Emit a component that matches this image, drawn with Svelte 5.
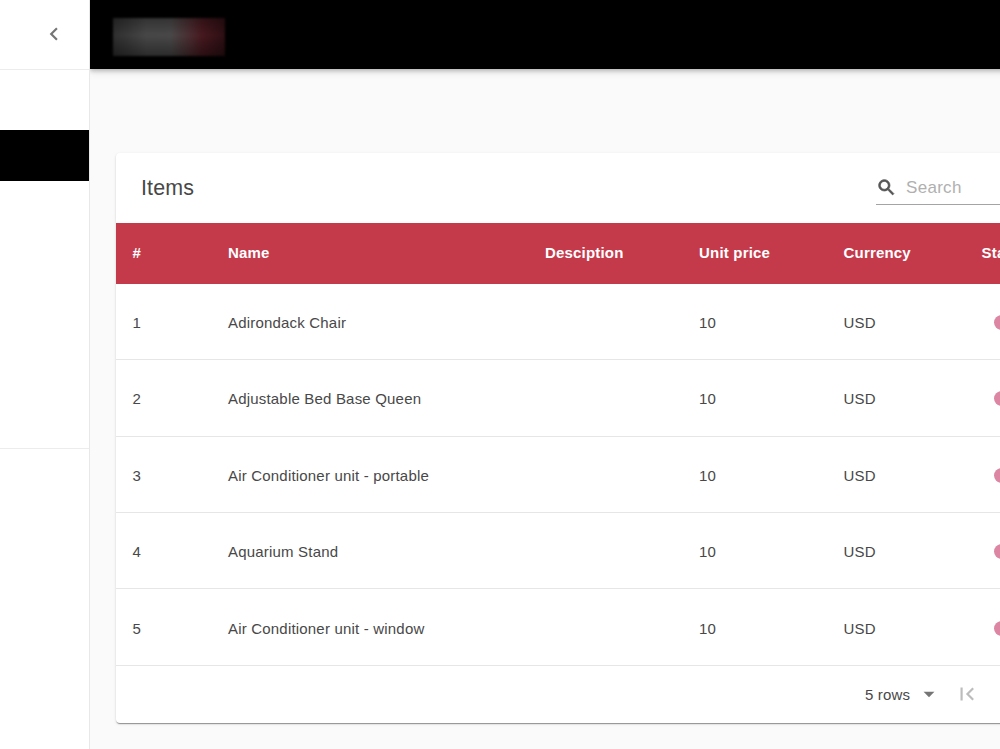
<script>
  const columns = ['#', 'Name', 'Desciption', 'Unit price', 'Currency', 'Status'];

  const items = [
    { id: 1, name: 'Adirondack Chair', description: '', price: 10, currency: 'USD' },
    { id: 2, name: 'Adjustable Bed Base Queen', description: '', price: 10, currency: 'USD' },
    { id: 3, name: 'Air Conditioner unit - portable', description: '', price: 10, currency: 'USD' },
    { id: 4, name: 'Aquarium Stand', description: '', price: 10, currency: 'USD' },
    { id: 5, name: 'Air Conditioner unit - window', description: '', price: 10, currency: 'USD' },
  ];

  let search = $state('');
  let filtered = $derived(items.filter((item) => item.name.toLowerCase().includes(search.toLowerCase())));
</script>

<div class="layout">
  <aside class="drawer">
    <div class="drawer-header">
      <button class="icon-btn" aria-label="Close drawer">
        <svg width="26" height="26" viewBox="0 0 24 24"><path d="M15.41 7.41L14 6l-6 6 6 6 1.41-1.41L10.83 12z" /></svg>
      </button>
    </div>
    <nav class="drawer-nav">
      <div class="nav-item active"></div>
    </nav>
  </aside>

  <div class="page">
    <header class="app-bar">
      <div class="logo"></div>
    </header>

    <main class="card">
      <div class="toolbar">
        <h6>Items</h6>
        <label class="search">
          <svg width="21" height="21" viewBox="0 0 24 24"><path d="M15.5 14h-.79l-.28-.27C15.41 12.59 16 11.11 16 9.5 16 5.91 13.09 3 9.5 3S3 5.91 3 9.5 5.91 16 9.5 16c1.61 0 3.09-.59 4.23-1.57l.27.28v.79l5 4.99L20.49 19l-4.99-5zm-6 0C7.01 14 5 11.99 5 9.5S7.01 5 9.5 5 14 7.01 14 9.5 11.99 14 9.5 14z" /></svg>
          <input type="text" placeholder="Search" bind:value={search} />
        </label>
      </div>

      <div class="row head">
        {#each columns as column}
          <span>{column}</span>
        {/each}
      </div>

      {#each filtered as item (item.id)}
        <div class="row">
          <span>{item.id}</span>
          <span>{item.name}</span>
          <span>{item.description}</span>
          <span>{item.price}</span>
          <span>{item.currency}</span>
          <span><i class="switch"></i></span>
        </div>
      {/each}

      <div class="pagination">
        <span class="rows-select">5 rows</span>
        <svg class="arrow" width="26" height="26" viewBox="0 0 24 24"><path d="M7 10l5 5 5-5z" /></svg>
        <svg class="first" width="26" height="26" viewBox="0 0 24 24"><path d="M18.41 16.59L13.82 12l4.59-4.59L17 6l-6 6 6 6zM6 6h2v12H6z" /></svg>
      </div>
    </main>
  </div>
</div>

<style>
:global(body) {
  background: #fafafa;
}

.layout {
  display: flex;
  height: 749px;
  overflow: hidden;
  font-family: "Liberation Sans", Arial, sans-serif;
  color: #484848;
}

/* DRAWER */
.drawer {
  box-sizing: border-box;
  position: relative;
  z-index: 1;
  width: 90px;
  flex-shrink: 0;
  background: #fff;
  border-right: 1px solid #e8e8e8;
}
.drawer-header {
  box-sizing: border-box;
  height: 70px;
  display: flex;
  align-items: center;
  justify-content: flex-end;
  padding: 0 22px 1px 0;
  border-bottom: 1px solid #ececec;
}
.icon-btn {
  display: flex;
  padding: 0;
  border: 0;
  background: none;
}
.icon-btn svg { fill: #757575; }
.drawer-nav {
  box-sizing: border-box;
  height: 379px;
  padding-top: 60px;
  border-bottom: 1px solid #ececec;
}
.nav-item { height: 51px; }
.nav-item.active { background: #000; }

/* PAGE */
.page {
  width: 1070px;
  flex-shrink: 0;
  display: flex;
  flex-direction: column;
}
.app-bar {
  height: 69px;
  flex-shrink: 0;
  display: flex;
  align-items: center;
  padding: 4px 0 0 22.5px;
  box-sizing: border-box;
  background: #000;
  box-shadow: 0 2px 4px rgba(0,0,0,0.2), 0 3px 8px rgba(0,0,0,0.1);
}
.logo {
  width: 112px;
  height: 38px;
  background:
    linear-gradient(180deg, rgba(0,0,0,0.3) 0%, rgba(0,0,0,0) 45%, rgba(0,0,0,0.4) 100%),
    linear-gradient(90deg, #2e2e2e 0%, #484848 30%, #4a4848 52%, #4a2a2e 70%, #46181e 80%, #2c0f13 100%);
  filter: blur(0.8px);
}

/* CARD */
.card {
  margin: 84px 26px 0 25.5px;
  border-radius: 4px;
  background: #fff;
  box-shadow: 0 2px 1px -1px rgba(0,0,0,0.25), 0 1px 1px rgba(0,0,0,0.16), 0 1px 3px rgba(0,0,0,0.12);
}
.toolbar {
  height: 69.5px;
  display: flex;
  align-items: center;
  padding-left: 25.5px;
}
h6 {
  width: 735px;
  margin: 0;
  padding-top: 2px;
  font-size: 21.4px;
  font-weight: 400;
  letter-spacing: 0.16px;
}
.search {
  box-sizing: border-box;
  flex: 1;
  height: 34px;
  display: flex;
  align-items: center;
  margin-top: 1px;
  border-bottom: 1px solid #a4a4a4;
}
.search svg {
  flex-shrink: 0;
  fill: #555;
  stroke: #555;
  stroke-width: 0.8px;
}
.search input {
  width: 150px;
  margin-left: 9px;
  padding: 0;
  border: 0;
  outline: 0;
  font: 17px "Liberation Sans", Arial, sans-serif;
  letter-spacing: 0.3px;
  color: inherit;
  background: none;
}
.search input::placeholder { color: #b0b0b0; opacity: 1; }

.row {
  box-sizing: border-box;
  height: 76.4px;
  display: grid;
  grid-template-columns: 95.5px 317px 154px 144.5px 138px 1fr;
  align-items: center;
  padding: 2px 0 0 17px;
  border-bottom: 1px solid #e6e6e6;
  font-size: 15px;
  letter-spacing: 0.19px;
}
.row.head {
  height: 61.3px;
  padding-top: 0;
  padding-bottom: 2px;
  border-bottom: 0;
  background: #c43a4b;
  color: #fff;
  font-weight: 700;
}
.switch {
  display: block;
  width: 36px;
  height: 15px;
  margin-left: 12.5px;
  border-radius: 8px;
  background: #dc86a4;
}

.pagination {
  height: 57.4px;
  display: flex;
  align-items: center;
  padding-left: 749.5px;
}
.rows-select {
  font-size: 15px;
  letter-spacing: 0.15px;
}
.arrow { margin-left: 6px; fill: #757575; }
.first { margin-left: 12px; fill: #bcbcbc; }
</style>
